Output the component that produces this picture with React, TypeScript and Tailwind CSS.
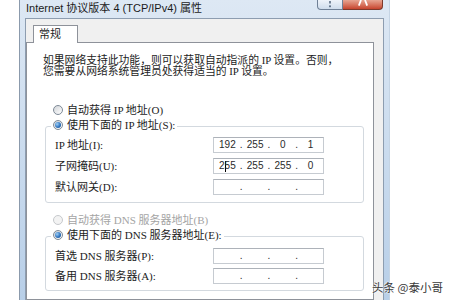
import React from "react";

const sim = "font-['Liberation_Serif','Noto_Sans_CJK_SC',serif]";
const ui = "font-['Liberation_Sans','Noto_Sans_CJK_SC',sans-serif]";

interface RadioProps {
    checked?: boolean;
    disabled?: boolean;
}

const Radio: React.FC<RadioProps> = ({ checked, disabled }) => (
    <span
        className={
            disabled
                ? "flex h-[10px] w-[10px] shrink-0 items-center justify-center rounded-full border border-[#c6c9cc] bg-[#f3f3f3]"
                : "flex h-[10px] w-[10px] shrink-0 items-center justify-center rounded-full border border-[#7e8a97] bg-linear-to-br from-[#d2d5d9] to-white"
        }
    >
        {checked && (
            <span className="h-[6px] w-[6px] rounded-full bg-[radial-gradient(circle_at_35%_35%,#9fd0f6,#2f74c0_55%,#1a4c8c)]" />
        )}
    </span>
);

interface IpProps {
    parts?: string[];
    caret?: boolean;
}

const IpBox: React.FC<IpProps> = ({ parts = ["", "", "", ""], caret }) => (
    <div className="flex h-[16px] w-[111px] shrink-0 items-center border border-[#c6cbd1] border-t-[#adb2b9] bg-white pl-[1px] font-['Liberation_Sans',sans-serif] text-[10px] leading-none text-[#2a2a2a]">
        {parts.map((p, i) => (
            <React.Fragment key={i}>
                {i > 0 && <span className="w-[3px] text-center">.</span>}
                <span className="flex-1 text-center">
                    {caret && i === 0 ? (
                        <>
                            2<span className="-mr-px inline-block h-[11px] w-px bg-black align-middle" />
                            55
                        </>
                    ) : (
                        p
                    )}
                </span>
            </React.Fragment>
        ))}
    </div>
);

interface RowProps {
    label: string;
    parts?: string[];
    caret?: boolean;
}

const FieldRow: React.FC<RowProps> = ({ label, parts, caret }) => (
    <div className="flex h-[16px] items-center pl-[9px]">
        <span className="w-[158px] shrink-0">{label}</span>
        <IpBox parts={parts} caret={caret} />
    </div>
);

export default function App() {
    return (
        <div className="relative h-[300px] w-[450px] overflow-hidden bg-white">
            <div className="flex h-full">
                <div className="w-[19px] shrink-0" />
                <div className="flex w-[371px] shrink-0 flex-col border-x border-l-[#8b9aac] border-r-[#c5d4e4] bg-linear-to-b from-[#dde8f4] to-[#b8cfe8]">
                    {/* title bar */}
                    <div className="flex h-[18px] shrink-0 items-start justify-between pl-[6px] pr-[6px]">
                        <span className={`${ui} text-[11px] leading-[17px] text-[#1b1b1b]`}>
                            Internet 协议版本 4 (TCP/IPv4) 属性
                        </span>
                        <div className="flex">
                            {/* help button, cut off by the top edge */}
                            <div className="flex h-[10px] w-[26px] items-start justify-center rounded-bl-[4px] border border-t-0 border-[#6f8096] bg-linear-to-b from-[#eef3f9] to-[#cfdcec]">
                                <svg width="8" height="7" viewBox="0 0 8 7" className="mt-px">
                                    <path d="M4 0 V2.5" stroke="#5a6c82" strokeWidth="1.6" fill="none" />
                                    <rect x="3.1" y="4.4" width="1.8" height="1.8" fill="#5a6c82" />
                                </svg>
                            </div>
                            {/* close button */}
                            <div className="flex h-[10px] w-[40px] items-start justify-center rounded-br-[4px] border border-l-0 border-t-0 border-[#7d3a2c] bg-linear-to-b from-[#e7a592] to-[#c6432d]">
                                <svg width="10" height="7" viewBox="0 0 10 7">
                                    <path d="M3 0 L0.8 5.6 M7 0 L9.2 5.6" stroke="#fff" strokeWidth="1.8" fill="none" />
                                </svg>
                            </div>
                        </div>
                    </div>

                    {/* client area */}
                    <div className={`${sim} mx-[5px] flex flex-1 flex-col border-x border-t border-[#8d9db0] bg-[#f0f0f0] pr-[9px] pt-[6px] text-[11px] text-[#1c1c1c]`}>
                        <div className="flex pl-[7px]">
                            <div className="relative z-10 -mb-px flex h-[18px] w-[45px] items-center border border-b-0 border-[#8e929a] bg-white pl-[5px] leading-none">
                                常规
                            </div>
                        </div>
                        <div className="flex flex-1 flex-col border border-[#8e929a] bg-white">
                            <p className="mt-[12px] pl-[16px] text-[10.8px] leading-[11px]">
                                如果网络支持此功能，则可以获取自动指派的 IP 设置。否则，
                                <br />
                                您需要从网络系统管理员处获得适当的 IP 设置。
                            </p>

                            <div className="ml-[26px] mt-[26px] flex h-[14px] items-center gap-[4px]">
                                <Radio />
                                <span>自动获得 IP 地址(O)</span>
                            </div>

                            <div className="ml-[18px] mt-[9px] flex w-[319px] flex-col rounded-[3px] border border-[#d3d9df] pb-[7px]">
                                <div className="-mt-[9px] ml-[5px] flex h-[14px] w-fit items-center gap-[4px] bg-white px-[2px]">
                                    <Radio checked />
                                    <span>使用下面的 IP 地址(S):</span>
                                </div>
                                <div className="mt-[5px] flex flex-col gap-[5px]">
                                    <FieldRow label="IP 地址(I):" parts={["192", "255", "0", "1"]} />
                                    <FieldRow label="子网掩码(U):" parts={["255", "255", "255", "0"]} caret />
                                    <FieldRow label="默认网关(D):" />
                                </div>
                            </div>

                            <div className="ml-[26px] mt-[10px] flex h-[14px] items-center gap-[4px] text-[#a4a4a4]">
                                <Radio disabled />
                                <span>自动获得 DNS 服务器地址(B)</span>
                            </div>

                            <div className="ml-[18px] mt-[9px] flex w-[319px] flex-col rounded-[3px] border border-[#d3d9df] pb-[6px]">
                                <div className="-mt-[9px] ml-[5px] flex h-[14px] w-fit items-center gap-[4px] bg-white px-[2px]">
                                    <Radio checked />
                                    <span>使用下面的 DNS 服务器地址(E):</span>
                                </div>
                                <div className="mt-[6px] flex flex-col gap-[4px]">
                                    <FieldRow label="首选 DNS 服务器(P):" />
                                    <FieldRow label="备用 DNS 服务器(A):" />
                                </div>
                            </div>
                        </div>
                    </div>
                </div>
            </div>

            {/* watermark */}
            <span className="absolute left-[372px] top-[279px] font-['Noto_Sans_CJK_SC',sans-serif] text-[11.5px] leading-[16px] text-[#3a3a3a] [text-shadow:0_0_2px_#fff,0_0_2px_#fff]">
                头条 @泰小哥
            </span>
        </div>
    );
}
